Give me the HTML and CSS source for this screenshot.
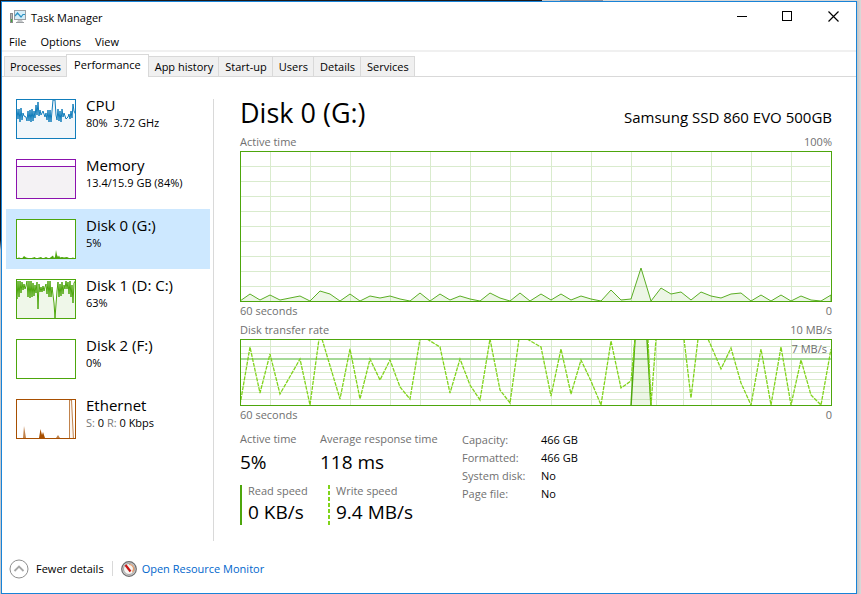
FILE: index.html
```html
<!DOCTYPE html>
<html lang="en">
<head>
<meta charset="utf-8">
<title>Task Manager</title>
<link rel="stylesheet" href="styles.css">
</head>
<body>
<div class="window">
  <header class="titlebar">
    <svg class="app-icon" width="17" height="16" viewBox="0 0 17 16" aria-hidden="true">
      <rect x="0.500" y="4.500" width="2" height="9" fill="#b5b5b5" stroke="#8a8a8a"/>
      <rect x="1" y="10" width="1" height="3" fill="#3fae3a"/>
      <rect x="4.500" y="1.500" width="11" height="9" fill="#d5edf8" stroke="#9a9fa3"/>
      <path d="M5 7L7.500 4L11 8L13 5.500L15 5.500" fill="none" stroke="#2c93c4" stroke-width="1.200"/>
      <path d="M8 11h4l1 2H7z" fill="#c3c6c8"/>
      <rect x="6" y="13" width="8" height="1" fill="#9b9fa2"/>
    </svg>
    <h1 class="app-title">Task Manager</h1>
    <div class="window-buttons">
      <button aria-label="Minimize"><svg width="11" height="11" viewBox="0 0 11 11"><path d="M0.500 5.500h10" /></svg></button>
      <button aria-label="Maximize"><svg width="11" height="11" viewBox="0 0 11 11"><path d="M0.500 0.500h9v9h-9z" /></svg></button>
      <button aria-label="Close"><svg class="smooth" width="11" height="11" viewBox="0 0 11 11"><path d="M0.500 0.500l10 10M10.500 0.500l-10 10" /></svg></button>
    </div>
  </header>
  <nav class="menu">
    <button>File</button><button>Options</button><button>View</button>
  </nav>
  <div class="tabs" role="tablist">
    <button role="tab">Processes</button>
    <button role="tab" class="current" aria-selected="true">Performance</button>
    <button role="tab">App history</button>
    <button role="tab">Start-up</button>
    <button role="tab">Users</button>
    <button role="tab">Details</button>
    <button role="tab">Services</button>
  </div>
  <div class="content">
    <aside class="sidebar">
      <button class="device">
        <svg class="thumb cpu" width="60" height="40" viewBox="0 0 60 40">
          <path class="plot" d="M-1 41V14L1 10L2 20L3 10L4 23L5 9L6 21L7 14L8 17L10 18L11 22L12 12L13 22L14 11L15 23L16 10L17 22L18 12L19 19L20 6L21 16L22 3L23 17L24 11L25 16L27 12L29 18L30 14L31 21L32 11L33 23L34 11L35 23L37 1L39 1L40 16L41 21L42 10L43 22L44 12L45 23L46 10L47 18L48 14L50 20L52 18L53 15L54 20L55 12L56 19L57 5L58 12L60 16L61 41z"/>
          <rect class="frame" x="0.500" y="0.500" width="59" height="39"/>
        </svg>
        <span class="device-text"><span class="name">CPU</span><span class="detail">80%&nbsp; 3.72 GHz</span></span>
      </button>
      <button class="device">
        <svg class="thumb memory" width="60" height="40" viewBox="0 0 60 40">
          <path class="plot" d="M-1 7.500H61V41H-1z"/>
          <rect class="frame" x="0.500" y="0.500" width="59" height="39"/>
        </svg>
        <span class="device-text"><span class="name">Memory</span><span class="detail">13.4/15.9 GB (84%)</span></span>
      </button>
      <button class="device selected">
        <svg class="thumb disk" width="60" height="40" viewBox="0 0 60 40">
          <path class="solid" d="M0 39.500L3 38.500L6 39.500L8 37L10 38.500L14 39.500L19 38L20 39.500L25 38L27 39.500L30 38L33 39.500L37 36.500L38 39L39 38L40 31L41 36L42 38L43 36.500L44 38.500L46 38L48 38.500L51 38L54 39.500L57 38.500L59 39.500z"/>
          <rect class="frame" x="0.500" y="0.500" width="59" height="39"/>
        </svg>
        <span class="device-text"><span class="name">Disk 0 (G:)</span><span class="detail">5%</span></span>
      </button>
      <button class="device">
        <svg class="thumb disk" width="60" height="40" viewBox="0 0 60 40">
          <path class="plot" d="M-1 41V10L1 20L2 2L3 18L4 2L5 14L6 3L7 11L8 5L9 10L10 7L11 2L12 18L13 2L14 19L15 2L16 18L17 4L18 17L19 6L20 14L21 3L22 30L23 5L24 13L25 8L26 13L27 7L28 12L29 8L30 5L31 15L32 2L33 18L34 2L35 18L36 8L38 24L39 39L41 12L42 3L43 18L44 5L45 17L46 3L47 15L48 6L49 10L50 2L51 10L52 3L53 15L54 2L55 18L56 6L57 24L58 4L60 1L61 41z"/>
          <rect class="frame" x="0.500" y="0.500" width="59" height="39"/>
        </svg>
        <span class="device-text"><span class="name">Disk 1 (D: C:)</span><span class="detail">63%</span></span>
      </button>
      <button class="device">
        <svg class="thumb disk" width="60" height="40" viewBox="0 0 60 40"><rect class="frame" x="0.500" y="0.500" width="59" height="39"/></svg>
        <span class="device-text"><span class="name">Disk 2 (F:)</span><span class="detail">0%</span></span>
      </button>
      <button class="device">
        <svg class="thumb network" width="60" height="40" viewBox="0 0 60 40">
          <path class="solid pale" d="M7 39L8 27L10 39zM40 39L42 36L44 39z"/>
          <path class="solid" d="M23 39L24.500 30L26 36L27 33L29 39z"/>
          <path class="plot pale" d="M53.500 41V1H55.500L57.500 41"/>
          <rect class="frame" x="0.500" y="0.500" width="59" height="39"/>
        </svg>
        <span class="device-text"><span class="name">Ethernet</span><span class="detail"><i>S:</i> 0 <i>R:</i> 0 Kbps</span></span>
      </button>
    </aside>
    <main class="main">
      <div class="heading"><h2>Disk 0 (G:)</h2><p>Samsung SSD 860 EVO 500GB</p></div>
      <div class="caption"><span>Active time</span><span>100%</span></div>
      <svg class="chart active-chart" viewBox="0 0 592 151" preserveAspectRatio="none" role="img" aria-label="Active time">
        <path class="grid" d="M30.500 0V151M70.500 0V151M110.500 0V151M150.500 0V151M190.500 0V151M230.500 0V151M270.500 0V151M311.500 0V151M351.500 0V151M391.500 0V151M431.500 0V151M471.500 0V151M511.500 0V151M551.500 0V151M0 15.500H590M0 30.500H590M0 45.500H590M0 60.500H590M0 75.500H590M0 90.500H590M0 105.500H590M0 120.500H590M0 135.500H590"/>
        <path class="usage" d="M0 150L10 143L20 149L30 144L40 149L50 147L60 145L70 150L80 140L90 143L100 150L110 143L120 150L130 145L140 147L150 145L160 148L170 150L180 142L190 150L200 143L210 149L220 145L230 148L240 150L250 142L260 147L270 150L280 142L290 150L301 143L311 149L321 143L331 149L341 145L351 148L361 150L371 139L381 149L391 148L401 117L411 150L421 137L431 143L441 141L451 149L461 141L471 145L481 147L491 143L501 142L511 150L521 144L531 150L541 144L551 150L561 145L571 149L581 150L591 144V151H0z"/>
        <rect class="border" x="0.500" y="0.500" width="591" height="150"/>
      </svg>
      <div class="caption axis"><span>60 seconds</span><span>0</span></div>
      <div class="caption"><span>Disk transfer rate</span><span>10 MB/s</span></div>
      <div class="chart-wrap">
        <svg class="chart rate-chart" viewBox="0 0 592 67" preserveAspectRatio="none" role="img" aria-label="Disk transfer rate">
          <path class="grid" d="M30.500 0V67M70.500 0V67M110.500 0V67M150.500 0V67M180.500 0V67M230.500 0V67M270.500 0V67M311.500 0V67M351.500 0V67M391.500 0V67M416.500 0V67M443.500 0V67M471.500 0V67M511.500 0V67M551.500 0V67M0 7.500H590M0 14.500H590M0 20.500H590M0 27.500H590M0 33.500H590M0 40.500H590M0 47.500H590M0 53.500H590M0 60.500H590"/>
          <path class="mark" d="M0 19.500H591"/>
          <path class="read" d="M391 67L395 0H407L411 67"/>
          <path class="write" d="M0 66L10 8L20 54L30 15L40 55L60 20L70 66L79 0M82 0L100 60L110 10L120 60L130 20L140 41L150 21L160 48L170 60L180 0M187 0L200 8L210 54L220 20L230 46L240 61L250 0L260 51L270 64L279 0M287 0L301 8L311 57L321 10L331 55L341 21L351 42L361 66L371 2L381 49L391 42L395 0M408 0L411 66L416 0M444 0L451 59L458 0M468 0L472 9L481 30L491 9L501 44L511 66L521 10L531 66L541 8L551 66L561 21L571 56L581 66L591 10"/>
          <rect class="border" x="0.500" y="0.500" width="591" height="66"/>
        </svg>
        <span class="chart-label">7 MB/s</span>
      </div>
      <div class="caption axis"><span>60 seconds</span><span>0</span></div>
      <div class="stats">
        <div class="live">
          <div class="stat"><span>Active time</span><b>5%</b></div>
          <div class="stat"><span>Average response time</span><b>118 ms</b></div>
          <div class="stat read-stat"><span>Read speed</span><b>0 KB/s</b></div>
          <div class="stat write-stat"><span>Write speed</span><b>9.4 MB/s</b></div>
        </div>
        <table class="facts">
          <tr><th scope="row">Capacity:</th><td>466 GB</td></tr>
          <tr><th scope="row">Formatted:</th><td>466 GB</td></tr>
          <tr><th scope="row">System disk:</th><td>No</td></tr>
          <tr><th scope="row">Page file:</th><td>No</td></tr>
        </table>
      </div>
    </main>
  </div>
  <footer class="footer">
    <button class="fewer">
      <svg width="20" height="20" viewBox="0 0 20 20" aria-hidden="true"><circle cx="10" cy="10" r="9" fill="#fff" stroke="#8f8f8f"/><path d="M5.500 12L10 7.500L14.500 12" fill="none" stroke="#a6a6a6" stroke-width="1.800"/></svg>
      Fewer details
    </button>
    <a class="monitor" href="#monitor">
      <svg width="16" height="16" viewBox="0 0 16 16" aria-hidden="true"><circle cx="8" cy="8" r="7.300" fill="#d4d4d4" stroke="#6c6c6c" stroke-width="1.200"/><circle cx="8" cy="8" r="5.500" fill="#f7f5f1" stroke="#8a8a8a" stroke-width=".7"/><path d="M8 3.500A4.500 4.500 0 0 1 11.500 11" fill="none" stroke="#e89a68" stroke-width="1.200"/><path d="M4.500 4L9.500 10.500" stroke="#c81414" stroke-width="2.200"/></svg>
      Open Resource Monitor
    </a>
  </footer>
</div>
</body>
</html>
```
FILE: styles.css
```css
* { box-sizing: border-box; }

body {
  margin: 0;
  min-height: 100vh;
  display: flex;
  padding: 1px 4px 0 1px;
  background:
    linear-gradient(90deg, #1c1a1c 0 63%, #c9c9c9 63% 65%, #8b8d98 65% 70%, #d6d6d6 70%) top / 100% 1px no-repeat,
    linear-gradient(#10131c 0 240px, #c5c7cc 250px 100%) left / 1px 100% no-repeat,
    linear-gradient(90deg, #c4c4c4, #dadada) right / 4px 100% no-repeat;
  font: 11px/16px "Open Sans", "Segoe UI", sans-serif;
  color: #000;
}

button {
  border: 0;
  padding: 0;
  background: none;
  font: inherit;
  color: inherit;
  text-align: left;
}

h1, h2, p { margin: 0; font-weight: 400; }

.window {
  flex: 1;
  display: flex;
  flex-direction: column;
  min-width: 0;
  border: 1px solid #1883d7;
  background: #fff;
}

.titlebar { display: flex; align-items: center; height: 30px; padding-left: 8px; }
.app-title { flex: 1; margin-left: 4px; padding-top: 1px; font-size: 11px; }
.window-buttons { display: flex; align-self: stretch; }
.window-buttons button { display: grid; place-items: center; width: 46px; height: 28px; }
.window-buttons svg { fill: none; stroke: #000; shape-rendering: crispEdges; }
.window-buttons .smooth { shape-rendering: auto; stroke-width: 1.2; }

.menu { display: flex; gap: 14px; height: 20px; padding: 2px 0 0 7px; border-bottom: 2px solid #f0f0f0; }

.tabs { display: flex; align-items: flex-end; height: 25px; padding-left: 2px; border-bottom: 1px solid #d9d9d9; }
.tabs button {
  height: 20px;
  padding: 0 5px 0 6px;
  border: 1px solid #d9d9d9;
  border-width: 1px 1px 0 0;
  background: #f0f0f0;
}
.tabs button:first-child { padding: 0 5px; border-left-width: 1px; border-right-width: 0; }
.tabs .current { height: 23px; margin-bottom: -1px; padding: 0 7px 3px; border-left-width: 1px; background: #fff; }

.content { flex: 1; display: flex; }

.sidebar { width: 210px; padding: 12px 0 0 4px; }
.device { display: flex; width: 204px; height: 60px; padding: 10px; gap: 10px; }
.device.selected { background: #cde8ff; }
.device-text { display: flex; flex-direction: column; margin-top: -4px; white-space: nowrap; }
.name { font-size: 15px; line-height: 20px; }
.detail { font-size: 11px; line-height: 15px; }
.detail i { font-style: normal; color: #777; }

.thumb { flex: none; background: #fff; }
.thumb .frame { fill: none; stroke: var(--tone); }
.thumb .plot { fill: var(--tint); stroke: var(--tone); }
.thumb .solid { fill: var(--tone); }
.thumb .pale { opacity: .7; }
.cpu { --tone: #117dbb; --tint: #f1f6fa; }
.memory { --tone: #8b12ae; --tint: #f4f2f4; }
.disk { --tone: #4da60c; --tint: #eff7e9; }
.network { --tone: #a74f01; --tint: #fcf3eb; }

.main { flex: 1; min-width: 0; margin: 22px 0 0 1px; padding: 0 24px 0 27px; position: relative; }
.main::before { content: ""; position: absolute; left: 0; top: 0; bottom: 10px; width: 1px; background: #d9d9d9; }
.heading { display: flex; justify-content: space-between; align-items: baseline; height: 34px; line-height: 28px; }
.heading h2 { font-size: 27px; }
.heading p { font-size: 15px; }
.caption { display: flex; justify-content: space-between; height: 18px; line-height: 18px; font-size: 11px; color: #707070; }
.chart { display: block; width: 100%; }
.active-chart { height: 151px; }
.rate-chart { height: 67px; }
.chart path, .chart rect { vector-effect: non-scaling-stroke; }
.chart .grid { fill: none; stroke: #d9ebcd; shape-rendering: crispEdges; }
.chart .usage { fill: rgba(77, 166, 12, .1); stroke: #5bae25; }
.chart .mark { fill: none; stroke: #a5d998; stroke-width: 2; shape-rendering: crispEdges; }
.chart .read { fill: rgba(77, 166, 12, .1); stroke: #4da60c; stroke-width: 1.5; }
.chart .write { fill: none; stroke: #80d31b; stroke-width: 1.3; stroke-dasharray: 4 1; }
.chart .border { fill: none; stroke: #4da60c; shape-rendering: crispEdges; }
.chart-wrap { position: relative; }
.chart-label { position: absolute; right: 5px; top: 2px; font-size: 11px; color: #707070; }
.caption.axis { height: 19px; }

.stats { display: flex; gap: 21px; margin-top: 6px; }
.live { display: grid; grid-template-columns: 80px 121px; row-gap: 8px; }
.stat { white-space: nowrap; display: flex; flex-direction: column; font-size: 11px; line-height: 16px; color: #707070; }
.stat b { font-size: 19px; line-height: 30px; font-weight: 400; color: #000; }
.read-stat, .write-stat { height: 40px; padding-left: 6px; line-height: 12px; }
.read-stat { border-left: 2px solid #4da60c; }
.write-stat { margin-left: 8px; padding-left: 8px; background: repeating-linear-gradient(#80d31b 0 4px, #fff 4px 6px) left / 2px 100% no-repeat; }
.facts { align-self: flex-start; border-collapse: collapse; font-size: 11px; line-height: 18px; }
.facts th { width: 79px; padding: 0; font-weight: 400; text-align: left; color: #707070; }
.facts td { padding: 0; }

.footer { display: flex; align-items: center; height: 42px; padding: 0 7px 7px; }
.fewer, .monitor { display: flex; align-items: center; }
.fewer { gap: 7px; padding-right: 8px; border-right: 1px solid #d9d9d9; height: 15px; }
.monitor { gap: 5px; margin-left: 8px; color: #0066cc; text-decoration: none; }
```
